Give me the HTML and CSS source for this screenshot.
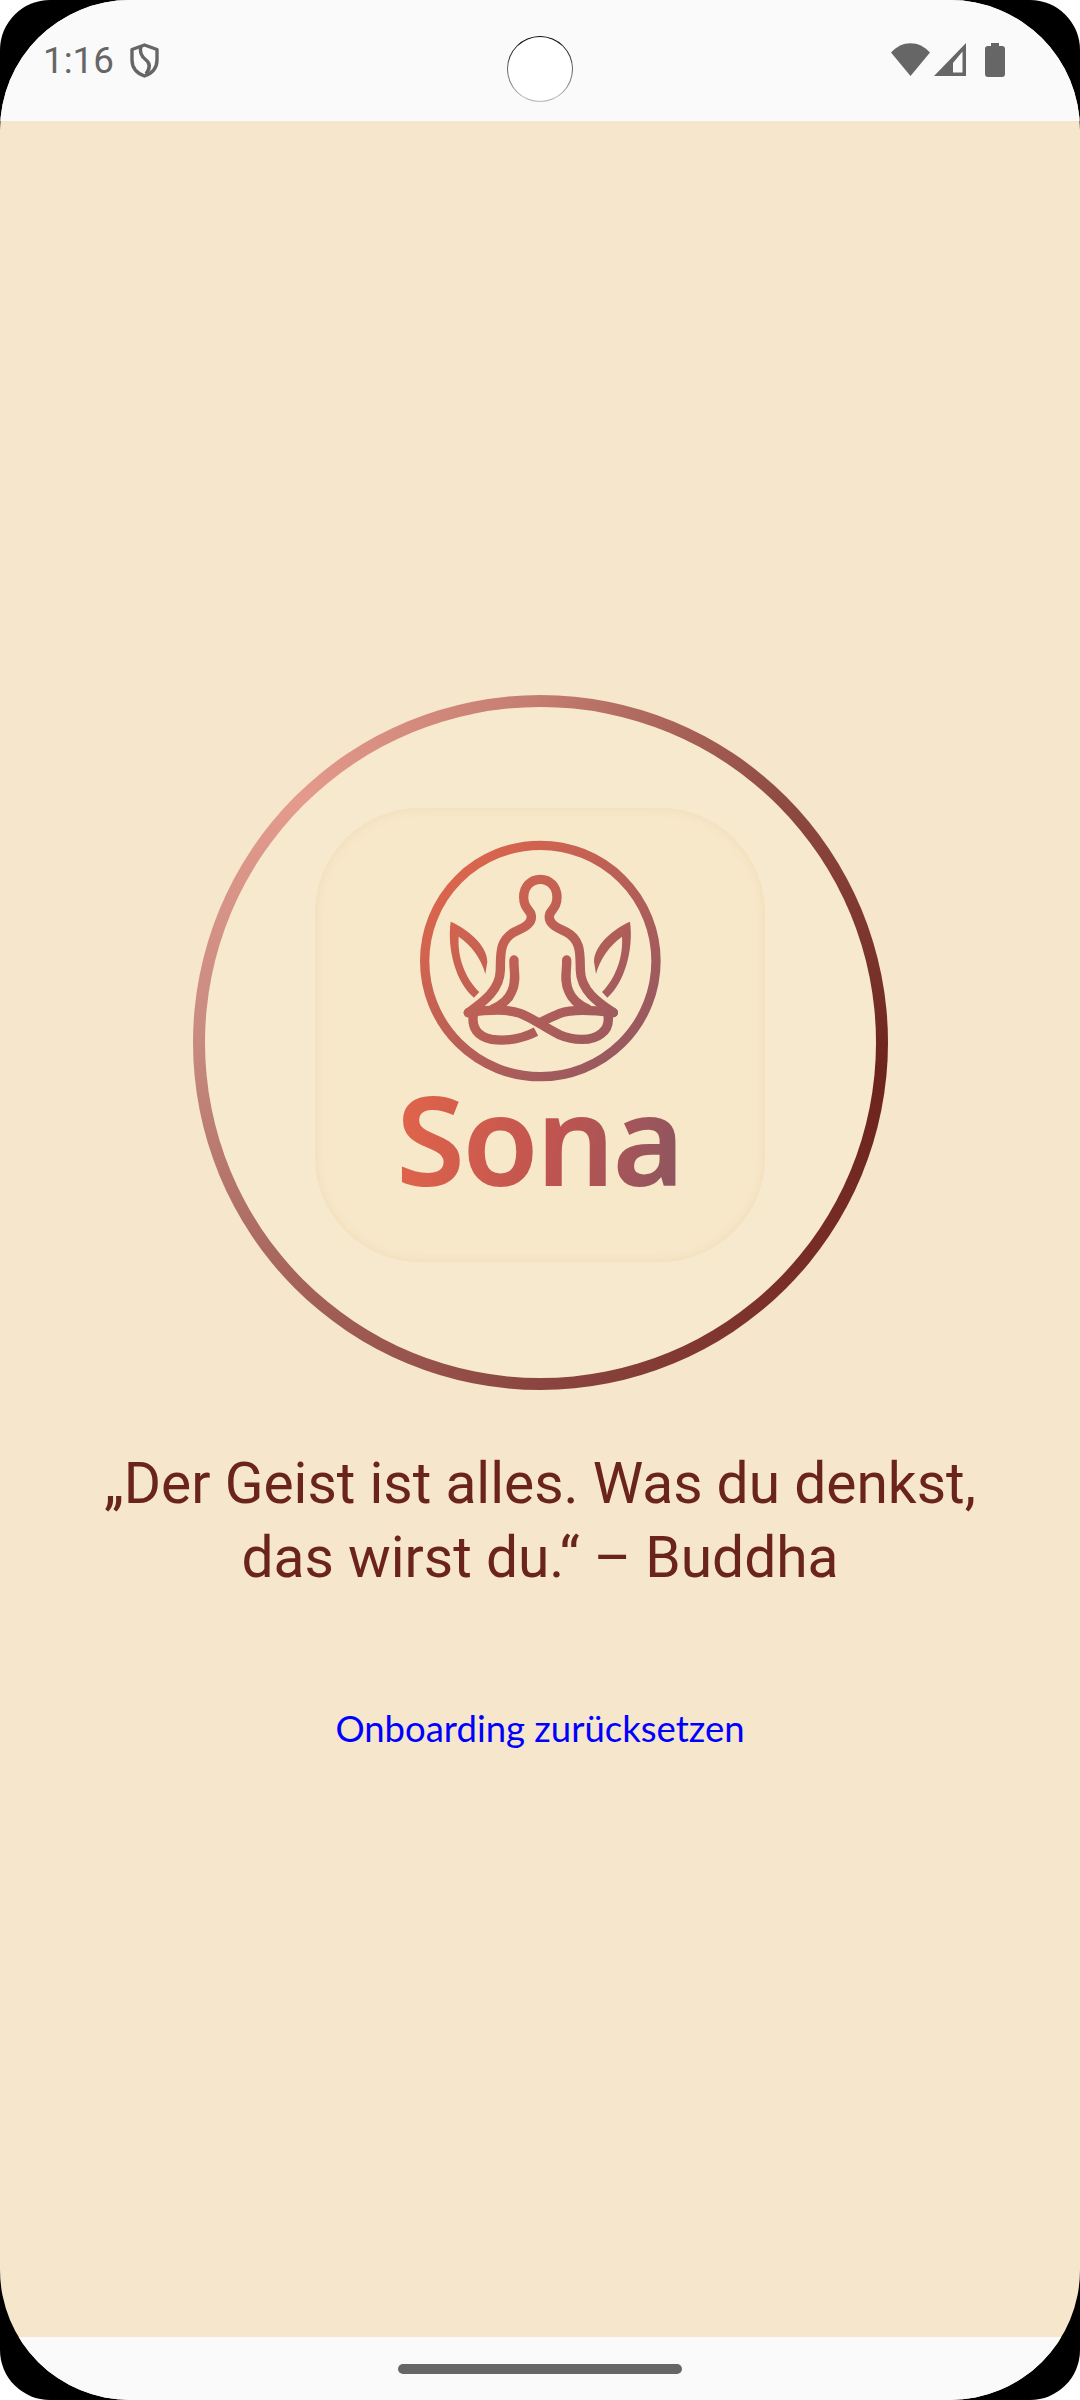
FILE: index.html
```html
<!DOCTYPE html>
<html lang="de">
<head>
  <meta charset="UTF-8" />
  <title>Sona</title>
  <link rel="stylesheet" href="styles.css">
</head>
<body>

  <div class="phone">
    <div class="screen">

      <!-- Statusleiste -->
      <header class="status-bar">
        <div class="status-left">
          <span class="clock">1:16</span>
          <svg class="shield" viewBox="0 0 29 35">
            <path d="M14.500 2 L27 6.500 V17 C27 25 21.500 30.500 14.500 33 C7.500 30.500 2 25 2 17 V6.500 Z" fill="none" stroke="#666" stroke-width="3.400" stroke-linejoin="round"/>
            <path d="M11 3 C9 10 12 14 16 17 C20 20 21 24 16 31" fill="none" stroke="#666" stroke-width="3.400"/>
          </svg>
        </div>
        <div class="camera"></div>
        <div class="status-right">
          <svg class="wifi" viewBox="0 0 39 33">
            <path d="M0 9.500 C11 -3 28 -3 39 9.500 L19.500 33 Z" fill="#666"/>
          </svg>
          <svg class="signal" viewBox="0 0 32 33">
            <path d="M32 0 V33 H0 Z M28.500 8.500 L19 20 V29.500 H28.500 Z" fill="#666" fill-rule="evenodd"/>
          </svg>
          <svg class="battery" viewBox="0 0 20 34">
            <path d="M6 0 H14 V3 H17 Q20 3 20 6 V31 Q20 34 17 34 H3 Q0 34 0 31 V6 Q0 3 3 3 H6 Z" fill="#666"/>
          </svg>
        </div>
      </header>

      <main class="content">
        <div class="ring">
          <div class="logo-card">
            <svg class="logo-mark" viewBox="0 0 840 840">
              <defs>
                <linearGradient id="logoGrad" gradientUnits="userSpaceOnUse" x1="120" y1="120" x2="760" y2="720">
                  <stop offset="0" stop-color="#e0664b"/>
                  <stop offset="1" stop-color="#905862"/>
                </linearGradient>
              </defs>
              <g fill="none" stroke="url(#logoGrad)" stroke-width="28" stroke-linecap="round" stroke-linejoin="round">
                <circle cx="421" cy="423" r="347"/>
                <!-- Kopf und Schultern -->
                <path d="M205 578 C240 552 300 515 301 450 C302 400 298 360 345 335 C375 322 402 308 392 280 C380 262 371 255 371 232 C371 200 393 178 421 178 C449 178 471 200 471 232 C471 255 462 262 450 280 C440 308 467 322 497 335 C544 360 540 400 541 450 C542 515 602 552 640 578"/>
                <!-- Arme -->
                <path d="M342 420 C340 450 352 480 335 515 C325 540 305 555 280 566"/>
                <path d="M500 420 C502 450 490 480 507 515 C517 540 537 555 562 566"/>
                <!-- Beine -->
                <path d="M205 578 C260 570 320 565 360 580 C400 595 430 620 480 645 C520 662 575 665 605 640 C625 625 628 600 622 575"/>
                <path d="M640 578 C580 570 520 565 480 580 C455 590 435 600 420 608"/>
                <path d="M222 575 C210 625 235 650 275 658 C320 665 370 655 408 635" stroke-linecap="butt"/>
              </g>
              <!-- Blaetter -->
              <path fill="url(#logoGrad)" d="M152 305 C200 325 262 375 262 425 L256 462 C245 420 215 375 176 350 C172 410 195 475 238 516 L222 533 C170 490 140 390 152 305 Z"/>
              <path fill="url(#logoGrad)" d="M690 305 C642 325 582 375 582 425 L588 462 C599 420 629 375 666 350 C670 410 647 475 606 516 L622 533 C672 490 702 390 690 305 Z"/>
            </svg>
            <span class="logo-name">Sona</span>
          </div>
        </div>

        <p class="quote">„Der Geist ist alles. Was du denkst,<br>das wirst du.“ – Buddha</p>
        <a class="reset-link" href="#">Onboarding zurücksetzen</a>
      </main>

      <footer class="nav-bar">
        <div class="home-pill"></div>
      </footer>

    </div>
  </div>

</body>
</html>
```

FILE: styles.css
```css
html, body {
  margin: 0;
  padding: 0;
  background: #fff;
}

/* Geraeterahmen */
.phone {
  width: 1080px;
  height: 2400px;
  background: #000;
  border-radius: 50px;
  overflow: hidden;
}
.screen {
  width: 1080px;
  height: 2400px;
  border-radius: 130px;
  overflow: hidden;
  display: flex;
  flex-direction: column;
  background: #f5e6cc;
}

/* Statusleiste */
.status-bar {
  height: 121px;
  flex: none;
  background: #fafafa;
  display: flex;
  justify-content: space-between;
  align-items: flex-start;
  padding: 43px 75px 0 43px;
  box-sizing: border-box;
  position: relative;
}
.status-left {
  display: flex;
  align-items: flex-start;
  gap: 16px;
}
.clock {
  font-family: Roboto, sans-serif;
  font-size: 36.750px;
  line-height: 35px;
  color: #666;
}
.shield {
  width: 29px;
  height: 35px;
}
.status-right {
  display: flex;
  align-items: flex-start;
}
.wifi {
  width: 39px;
  height: 33px;
  margin-right: 4px;
}
.signal {
  width: 32px;
  height: 33px;
  margin-right: 19px;
}
.battery {
  width: 20px;
  height: 34px;
}
.camera {
  position: absolute;
  top: 36px;
  left: 507px;
  width: 66px;
  height: 66px;
  box-sizing: border-box;
  border-radius: 50%;
  background: linear-gradient(#fff, #fff) padding-box, linear-gradient(#000, #bbb) border-box;
  border: 1.500px solid transparent;
}

/* Inhalt */
.content {
  flex: 1;
  display: flex;
  flex-direction: column;
  align-items: center;
  padding-top: 574px;
}
.ring {
  width: 695px;
  height: 695px;
  box-sizing: border-box;
  border: 12px solid transparent;
  padding-bottom: 15px;
  border-radius: 50%;
  background: linear-gradient(#f7e9ce, #f7e9ce) padding-box,
    conic-gradient(#c47c70 0deg, #8f4a42 45deg, #6d241e 95deg, #7a2e28 135deg, #8b4540 180deg, #a4625a 225deg, #c88a80 270deg, #e49b8d 315deg, #c47c70 360deg) border-box;
  display: flex;
  align-items: center;
  justify-content: center;
}
.logo-card {
  width: 450px;
  height: 454px;
  box-sizing: border-box;
  border-radius: 105px;
  background: #f7e8ca;
  box-shadow: inset 0 0 10px rgba(226, 196, 140, 0.35);
  display: flex;
  flex-direction: column;
  align-items: center;
  padding-top: 12px;
}
.logo-mark {
  width: 280px;
  height: 280px;
  flex: none;
}
.logo-name {
  font-family: "Open Sans", sans-serif;
  font-weight: 600;
  font-size: 122px;
  line-height: 125px;
  letter-spacing: -1px;
  margin-top: -24px;
  -webkit-text-stroke: 2px transparent;
  background: linear-gradient(100deg, #e2654a 0%, #bf5450 55%, #8b5661 100%);
  -webkit-background-clip: text;
  background-clip: text;
  color: transparent;
}

.quote {
  margin: 57px 0 0;
  font-family: Roboto, sans-serif;
  font-size: 56.900px;
  line-height: 74px;
  text-align: center;
  color: #6b241c;
}
.reset-link {
  margin-top: 110px;
  font-family: Lato, sans-serif;
  font-size: 36.500px;
  line-height: 46px;
  color: #00f;
  text-decoration: none;
}

/* Navigationsleiste */
.nav-bar {
  height: 63px;
  flex: none;
  background: #fafafa;
  display: flex;
  justify-content: center;
  padding-top: 27px;
  box-sizing: border-box;
}
.home-pill {
  width: 284px;
  height: 10px;
  border-radius: 5px;
  background: #666;
}
```
